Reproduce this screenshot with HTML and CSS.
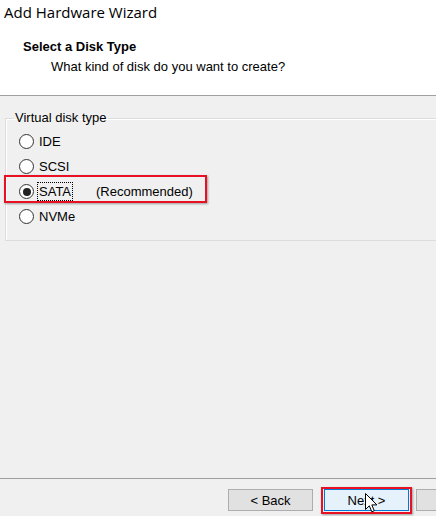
FILE: index.html
```
<!DOCTYPE html>
<html lang="en">
<head>
    <meta charset="UTF-8">
    <meta name="viewport" content="width=device-width, initial-scale=1.0">
    <title>Add Hardware Wizard</title>
    <link rel="stylesheet" href="styles.css">
</head>
<body>

    <div class="header">
        <div class="title">Add Hardware Wizard</div>
        <div class="step-title">Select a Disk Type</div>
        <div class="step-sub">What kind of disk do you want to create?</div>
    </div>

    <div class="main">
        <fieldset class="group">
            <legend>Virtual disk type</legend>
            <div class="option"><span class="radio"></span><span class="lbl">IDE</span></div>
            <div class="option"><span class="radio"></span><span class="lbl">SCSI</span></div>
            <div class="option marked"><span class="radio checked"></span><span class="lbl focus">SATA</span><span class="note">(Recommended)</span></div>
            <div class="option"><span class="radio"></span><span class="lbl">NVMe</span></div>
        </fieldset>
    </div>

    <div class="footer">
        <button class="btn">&lt; Back</button>
        <button class="btn btn-default marked-btn">Next &gt;
            <svg class="cursor" width="13" height="21" viewBox="0 0 13 21">
                <path d="M0.5 0.5 L0.5 16.5 L4.3 12.8 L6.8 18.8 L9.3 17.8 L6.8 11.9 L11.9 11.9 Z" fill="#fff" stroke="#000" stroke-width="1"/>
            </svg>
        </button>
        <button class="btn btn-cut"></button>
    </div>

</body>
</html>
```
FILE: styles.css
```
html, body {
    margin: 0;
    padding: 0;
}
body {
    width: 436px;
    height: 516px;
    overflow: hidden;
    background-color: #f0f0f0;
    font-family: "Liberation Sans", Arial, sans-serif;
    font-size: 13px;
    color: #000;
    display: flex;
    flex-direction: column;
}
.header {
    background-color: #fff;
    border-bottom: 1px solid #a0a0a0;
    box-sizing: border-box;
    height: 96px;
}
.title {
    font-family: "Open Sans", "Noto Sans", sans-serif;
    font-size: 15px;
    line-height: 20px;
    padding: 2px 0 0 4px;
}
.step-title {
    font-weight: bold;
    line-height: 16px;
    padding: 17px 0 0 23px;
}
.step-sub {
    line-height: 16px;
    padding: 4px 0 0 51px;
}
.main {
    flex: 1;
    padding: 14px 0 0 5px;
}
.group {
    margin: 0;
    padding: 3px 0 11px 2px;
    border: 1px solid #dcdcdc;
    border-right: none;
    box-shadow: inset 1px 1px 0 #fff;
}
.group legend {
    padding: 0 1px;
    margin-left: 6px;
    line-height: 16px;
}
.option {
    display: flex;
    align-items: center;
    height: 25px;
    margin-left: 11px;
    position: relative;
}
.radio {
    width: 13px;
    height: 13px;
    border: 1px solid #333;
    border-radius: 50%;
    background-color: #fff;
    box-sizing: content-box;
    display: flex;
    align-items: center;
    justify-content: center;
    margin-right: 4px;
}
.radio.checked::after {
    content: "";
    width: 8px;
    height: 8px;
    border-radius: 50%;
    background-color: #222;
}
.lbl {
    padding: 1px;
}
.lbl.focus {
    outline: 1px dotted #000;
}
.note {
    margin-left: 24px;
}
.marked::before {
    content: "";
    position: absolute;
    left: -15px;
    top: -4px;
    width: 199px;
    height: 24px;
    border: 2px solid #e81123;
    box-shadow: 1px 1px 2px rgba(0,0,0,0.35);
}
.footer {
    border-top: 1px solid #a0a0a0;
    display: flex;
    align-items: flex-start;
    padding: 10px 0 0 228px;
    box-sizing: border-box;
    height: 38px;
}
.btn {
    width: 85px;
    height: 22px;
    border: 1px solid #adadad;
    background-color: #e1e1e1;
    font-family: "Liberation Sans", Arial, sans-serif;
    font-size: 13px;
    padding: 0;
    color: #000;
    flex-shrink: 0;
    position: relative;
}
.btn-default {
    margin-left: 11px;
    border-color: #0078d7;
    background-color: #e5f1fb;
}
.marked-btn::before {
    content: "";
    position: absolute;
    left: -4px;
    top: -3px;
    right: -4px;
    bottom: -4px;
    border: 2px solid #e81123;
    box-shadow: 1px 1px 2px rgba(0,0,0,0.35);
}
.cursor {
    position: absolute;
    left: 40px;
    top: 3px;
}
.btn-cut {
    width: 20px;
    margin-left: 7px;
    border-right: none;
}
```
